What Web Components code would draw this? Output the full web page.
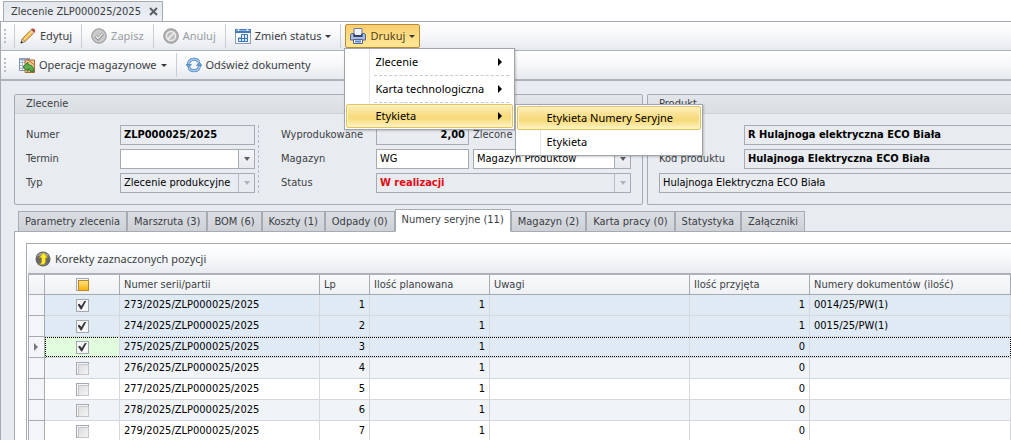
<!DOCTYPE html>
<html lang="pl">
<head>
<meta charset="UTF-8">
<meta name="viewport" content="width=device-width, initial-scale=1">
<title>Zlecenie ZLP000025/2025</title>
<style>
    :root {
        --ui-font: "DejaVu Sans Condensed", "DejaVu Sans", sans-serif;
        --bar-font: "Noto Sans", "Open Sans", sans-serif;
        --line: #a5aab3;
        --text: #3b3e44;
        --surface: #e8ebf0;
    }
    html {
        overflow: hidden;
    }
    body {
        margin: 0;
        background: #fff;
        color: var(--text);
        font: 11px/14px var(--ui-font);
    }
</style>
</head>
<body>
<order-window>
    <doc-tab slot="tabs">Zlecenie ZLP000025/2025</doc-tab>

    <tool-bar slot="bars" label="Zlecenie">
        <tool-separator></tool-separator>
        <tool-button icon="pencil">Edytuj</tool-button>
        <tool-separator></tool-separator>
        <tool-button icon="check" disabled>Zapisz</tool-button>
        <tool-separator></tool-separator>
        <tool-button icon="cancel" disabled>Anuluj</tool-button>
        <tool-separator></tool-separator>
        <tool-button icon="calendar" caret>Zmień status</tool-button>
        <tool-separator></tool-separator>
        <tool-button icon="printer" caret open>Drukuj
            <popup-menu slot="menu">
                <menu-entry arrow>Zlecenie</menu-entry>
                <menu-divider></menu-divider>
                <menu-entry arrow>Karta technologiczna</menu-entry>
                <menu-divider></menu-divider>
                <menu-entry arrow active>Etykieta
                    <popup-menu slot="submenu" wide>
                        <menu-entry active>Etykieta Numery Seryjne</menu-entry>
                        <menu-entry>Etykieta</menu-entry>
                    </popup-menu>
                </menu-entry>
            </popup-menu>
        </tool-button>
    </tool-bar>

    <tool-bar slot="bars" label="Magazyn" last>
        <tool-button icon="stock" caret>Operacje magazynowe</tool-button>
        <tool-separator></tool-separator>
        <tool-button icon="refresh">Odśwież dokumenty</tool-button>
    </tool-bar>

    <group-box slot="groups" heading="Zlecenie" class="order">
        <order-form></order-form>
    </group-box>
    <group-box slot="groups" heading="Produkt" class="product">
        <product-form></product-form>
    </group-box>

    <tab-strip active="5"
        items="Parametry zlecenia|Marszruta (3)|BOM (6)|Koszty (1)|Odpady (0)|Numery seryjne (11)|Magazyn (2)|Karta pracy (0)|Statystyka|Załączniki">
        <serial-panel>
            <tool-button slot="bar" icon="corrections">Korekty zaznaczonych pozycji</tool-button>
            <serial-grid></serial-grid>
        </serial-panel>
    </tab-strip>
</order-window>

<script>
const ICONS = {
    pencil: `
        <path d="M1 15l1.300-4.300L11.500 1.200l3.200 2.900L5.300 13.300z" fill="#f0b040" stroke="#94703c" stroke-width=".8"/>
        <path d="M4 11.700L12.700 2.800" stroke="#ffe08a" stroke-width="1.300"/>
        <path d="M1 15l1.200-4 2.900 2.500z" fill="#ecd9b5" stroke="#8a7350" stroke-width=".6"/>
        <path d="M.600 15.400l.7-2.400 1.700 1.500z" fill="#222"/>
        <path d="M11 1.800l1.300-1.400q2.800-.2 3 2.900l-1.200 1.300z" fill="#b5483a"/>
        <path d="M10.300 2.400l3.100 2.900" stroke="#ddd8d0" stroke-width="1.100"/>`,
    check: `
        <circle cx="8" cy="8" r="7.300" fill="#b7b7b7" stroke="#a2a2a2"/>
        <circle cx="8" cy="8" r="5.500" fill="#c9c9c9" stroke="#dedede" stroke-width=".6"/>
        <path d="M4.500 8.200l2.600 2.600 4.700-5.200" fill="none" stroke="#8b8b8b" stroke-width="3"/>
        <path d="M4.800 8.200l2.300 2.200 4.400-4.800" fill="none" stroke="#efefef" stroke-width="1.500"/>`,
    cancel: `
        <circle cx="8" cy="8" r="7.300" fill="#b1b1b1" stroke="#9c9c9c"/>
        <circle cx="8" cy="8" r="4.600" fill="#bcbcbc" stroke="#ededed" stroke-width="1.500"/>
        <path d="M4.900 11.100l6.200-6.200" stroke="#ededed" stroke-width="1.600"/>`,
    calendar: `
        <rect x=".5" y="1.500" width="15" height="14" fill="#f7f9fc" stroke="#8d9bb0"/>
        <rect x="0" y="1" width="16" height="4" fill="#4478b8"/>
        <path d="M1 2.500h14" stroke="#8fb5e2"/>
        <path d="M3.500 0v3M12.500 0v3" stroke="#dfe8f4" stroke-width="1.500"/>
        <path d="M6.500 6.500h6v7h-9v-3.500h3z" fill="#dce9f8" stroke="#3f74b9"/>
        <path d="M4 10.500h8.500M6.500 10v3.500M9.500 7v6.500" stroke="#3f74b9"/>`,
    printer: `
        <path d="M4 .5h8v6H4z" fill="#f4f7fd" stroke="#6c7da4"/>
        <path d="M1.500 5.500h2.500v3h8v-3h2.500l1 1.500v5h-15V7z" fill="#a9bbdf" stroke="#53658f"/>
        <path d="M3.500 6h9v3h-9z" fill="#344468"/>
        <path d="M5 1h6v6H5z" fill="#eef3fc"/>
        <path d="M3.500 11.500h9v4h-9z" fill="#fff" stroke="#53658f"/>
        <path d="M5 13.500h6" stroke="#4d86d8" stroke-width="2"/>`,
    stock: `
        <path d="M.500 1.500h10v12H.500z" fill="#fff" stroke="#7e8fb2"/>
        <path d="M1 2.500h9" stroke="#8ea6d4" stroke-width="2"/>
        <path d="M1 5.500h9M1 8.500h9M1 11.500h9M3.500 3v10M6.500 3v10" stroke="#a8b5d0"/>
        <path d="M6 3h9.500v12.500H6z" fill="#f3c98d" stroke="#a86a35"/>
        <path d="M9 3l6.500 5M6 12l9.500 3" stroke="#c8733f"/>
        <path d="M4 10l5-5v2.700q6 0 5.500 6.800h-3q.2-2.800-2.500-2.600v2.600z" fill="#5cae48" stroke="#236b24" stroke-width=".8"/>`,
    refresh: `
        <path d="M2.500 8.800Q2 2.500 8 2.300q3.500 0 5 2.700" fill="none" stroke="#4f82bf" stroke-width="3"/>
        <path d="M2.500 8.800Q2 2.500 8 2.300q3.500 0 5 2.700" fill="none" stroke="#a9cdf0" stroke-width="1.500"/>
        <path d="M13.500 7.200Q14 13.500 8 13.700q-3.500 0-5-2.700" fill="none" stroke="#4f82bf" stroke-width="3"/>
        <path d="M13.500 7.200Q14 13.500 8 13.700q-3.500 0-5-2.700" fill="none" stroke="#a9cdf0" stroke-width="1.500"/>
        <path d="M0 7.500h5.500L2.700 11zM10.500 8.500H16L13.300 5z" fill="#6ea2d8" stroke="#4f82bf" stroke-width=".7"/>`,
    corrections: `
        <circle cx="8" cy="8" r="7.500" fill="#66686b"/>
        <path d="M2 5.500a6.700 6.700 0 0 1 12 0Q8 3 2 5.500z" fill="#a5a7a9"/>
        <path d="M3 12a6.500 6.500 0 0 0 10 0Q8 14 3 12z" fill="#85878a"/>
        <path d="M8.500 1.500L13 6.800h-2.300v3.400q0 3.300-4.200 3.500l-2-.2q2-1.300 2-3V6.800H4z" fill="#ffe92e" stroke="#ab8d13" stroke-width=".7"/>`
};

// Wspólna baza: każdy element dostaje własny shadow root
class BaseElement extends HTMLElement {
    constructor() {
        super();
        this.attachShadow({ mode: 'open' });
    }
    draw(css, html) {
        this.shadowRoot.innerHTML = `<style>:host, * { box-sizing: border-box; } ${css}</style>${html}`;
    }
}

class AppIcon extends BaseElement {
    connectedCallback() {
        this.draw(`
            :host { display: block; flex: none; width: 16px; height: 16px; }
            svg { display: block; }
        `, `<svg width="16" height="16" viewBox="0 0 16 16" aria-hidden="true">${ICONS[this.getAttribute('name')]}</svg>`);
    }
}

class OrderWindow extends BaseElement {
    connectedCallback() {
        this.draw(`
            :host { display: flex; flex-direction: column; min-height: 100vh; }
            .tabs { display: flex; padding: 1px 3px 0; height: 21px; }
            .body { flex: 1; border-left: 1px solid var(--line); background: var(--surface); padding: 13px 0 0 13px; }
            .groups { display: flex; gap: 4px; margin-bottom: 4px; }
            ::slotted(.order) { flex: 0 0 629px; }
            ::slotted(.product) { flex: 1; }
        `, `
            <nav class="tabs"><slot name="tabs"></slot></nav>
            <slot name="bars"></slot>
            <main class="body">
                <div class="groups"><slot name="groups"></slot></div>
                <slot></slot>
            </main>
        `);
    }
}

class DocTab extends BaseElement {
    connectedCallback() {
        this.draw(`
            :host {
                display: flex; align-items: center; gap: 8px; padding: 0 4px 0 7px; height: 20px;
                background: linear-gradient(#e4e7eb, #eceff3);
                border: 1px solid var(--line); border-bottom: 0;
            }
            button { display: block; padding: 0; border: 0; background: none; width: 9px; height: 9px; }
            svg { display: block; }
        `, `
            <span><slot></slot></span>
            <button type="button" aria-label="Zamknij"><svg width="9" height="9" viewBox="0 0 9 9"><path d="M1 1l7 7M8 1L1 8" stroke="#5b5e65" stroke-width="2"/></svg></button>
        `);
    }
}

class ToolBar extends BaseElement {
    connectedCallback() {
        this.setAttribute('role', 'toolbar');
        this.setAttribute('aria-label', this.getAttribute('label'));
        this.draw(`
            :host {
                display: flex; align-items: center; height: 30px; padding-left: 3px;
                background: linear-gradient(#fff, #f7f8fa 45%, #e6eaee);
                border-left: 1px solid var(--line); border-bottom: 1px solid #adb1b9;
            }
            :host(:not([last])) { border-top: 1px solid var(--line); }
            :host([last]) { border-bottom-width: 2px; }
            .grip { width: 2px; height: 14px; margin-right: 8px; background: repeating-linear-gradient(#b9bdc4 0 2px, transparent 2px 4px); }
        `, `<span class="grip"></span><slot></slot>`);
    }
}

class ToolSeparator extends BaseElement {
    connectedCallback() {
        this.draw(`
            :host { display: block; width: 1px; height: 24px; margin: 0 4px; background: #c9cdd4; }
            :host(:first-child) { margin: 0; }
        `, '');
    }
}

class ToolButton extends BaseElement {
    connectedCallback() {
        const caret = this.hasAttribute('caret')
            ? '<svg class="caret" width="6" height="3" viewBox="0 0 6 3"><path d="M0 0h6L3 3z" fill="#33363b"/></svg>' : '';
        this.draw(`
            :host { display: block; position: relative; font: 11px/16px var(--bar-font); }
            button {
                display: flex; align-items: center; gap: 4px; height: 24px; padding: 0 4px;
                border: 1px solid transparent; border-radius: 2px; background: none;
                font: inherit; color: var(--text); white-space: nowrap;
            }
            button:disabled { color: #9b9ea3; }
            :host([open]) button {
                border-color: #b98b35; color: #4e3f1c;
                background: linear-gradient(#f8cd6e, #ffdf88 60%, #ffe797);
            }
        `, `
            <button type="button" ${this.hasAttribute('disabled') ? 'disabled' : ''}>
                <app-icon name="${this.getAttribute('icon')}"></app-icon>
                <span><slot></slot></span>${caret}
            </button>
            <slot name="menu"></slot>
        `);
    }
}

class PopupMenu extends BaseElement {
    connectedCallback() {
        this.setAttribute('role', 'menu');
        this.draw(`
            :host {
                position: absolute; z-index: 10; left: -1px; top: 24px; width: 171px; padding: 1px;
                border: 1px solid #9fa4ad; color: #000; font: 11px/16px var(--bar-font);
                background: linear-gradient(90deg, transparent 23px, #e2e4e7 23px 24px, transparent 24px) 1px 0 no-repeat, #fff;
                box-shadow: 1px 1px 2px rgba(0, 0, 0, .2);
            }
            :host([wide]) { left: calc(100% + 2px); top: 0; width: 188px; z-index: 11; }
        `, `<slot></slot>`);
    }
}

class MenuEntry extends BaseElement {
    connectedCallback() {
        const arrow = this.hasAttribute('arrow')
            ? '<svg width="4" height="8" viewBox="0 0 4 8"><path d="M0 0l4 4-4 4z" fill="#000"/></svg>' : '';
        this.draw(`
            :host { display: block; position: relative; }
            button {
                display: flex; align-items: center; justify-content: space-between; width: 100%; height: 24px;
                padding: 0 10px 0 28px; border: 1px solid transparent; border-radius: 2px;
                background: none; font: inherit; color: inherit; white-space: nowrap;
            }
            :host([active]) > button {
                border-color: #e3c35f; box-shadow: inset 0 0 0 1px #fff3c4;
                background: linear-gradient(#fcefbb, #f9dd85 45%, #f6d977 60%, #fff4c5);
            }
        `, `
            <button type="button" role="menuitem"><span><slot></slot></span>${arrow}</button>
            <slot name="submenu"></slot>
        `);
    }
}

class MenuDivider extends BaseElement {
    connectedCallback() {
        this.draw(`
            :host { display: block; height: 3px; padding: 1px 4px 0 28px; }
            div { border-top: 1px dashed #c6c9ce; }
        `, '<div></div>');
    }
}

class GroupBox extends BaseElement {
    connectedCallback() {
        this.draw(`
            :host { display: block; border: 1px solid var(--line); border-radius: 2px; min-width: 0; }
            :host(.product) { border-right: 0; border-radius: 2px 0 0 2px; }
            h2 {
                margin: 0; padding: 2px 11px; font: inherit; border-bottom: 1px solid #cdd1d6;
                background: linear-gradient(#e2e6ea, #d9dee3);
            }
            .content { padding: 11px; }
            :host(.product) .content { padding-right: 0; }
        `, `<h2>${this.getAttribute('heading')}</h2><div class="content"><slot></slot></div>`);
    }
}

const FIELD_CSS = `
    :host { display: flex; }
    .rows { display: grid; gap: 4px; align-content: start; }
    .row { display: flex; align-items: center; height: 20px; }
    .row > label { flex: none; white-space: nowrap; }
    .box { display: flex; flex: 1; min-width: 0; height: 20px; border: 1px solid var(--line); background: #fff; }
    .box.locked { background: var(--surface); }
    input, select {
        flex: 1; min-width: 0; width: 100%; margin: 0; padding: 0 3px; border: 0; border-radius: 0; outline: 0;
        background: none; appearance: none; font: inherit; color: #000; opacity: 1;
    }
    .bold { font-weight: bold; }
    .drop { display: flex; align-items: center; justify-content: center; width: 16px; border-left: 1px solid var(--line); background: linear-gradient(#f6f7f9, #e6e9ee); pointer-events: none; }
    .locked .drop { background: none; border-color: #b9bdc5; }
`;

function textField(id, value, cls = '', locked = false) {
    return `<div class="box ${locked ? 'locked' : ''}"><input id="${id}" type="text" class="${cls}" value="${value}" ${locked ? 'readonly' : ''}></div>`;
}

function dropField(id, value, cls = '', locked = false) {
    const tint = locked ? '#aeb2b9' : '#5a5e66';
    return `<div class="box ${locked ? 'locked' : ''}">
        <select id="${id}" class="${cls}" ${locked ? 'disabled' : ''}><option>${value}</option></select>
        <span class="drop"><svg width="6" height="4" viewBox="0 0 6 4"><path d="M0 0h6L3 4z" fill="${tint}"/></svg></span>
    </div>`;
}

class OrderForm extends BaseElement {
    connectedCallback() {
        this.draw(`
            ${FIELD_CSS}
            .left { flex: 0 0 233px; padding-right: 3px; border-right: 1px dashed #b5b9c1; }
            .left label { width: 94px; }
            .right { flex: 1; padding-left: 22px; }
            .right label { width: 95px; }
            .right label.next { width: auto; }
            .right .short { display: flex; flex: 0 0 93px; margin-right: 4px; }
            .next { margin-right: 8px; }
            .amount { text-align: right; }
            .red { color: #e00b14; }
        `, `
            <div class="rows left">
                <div class="row"><label for="number">Numer</label>${textField('number', 'ZLP000025/2025', 'bold', true)}</div>
                <div class="row"><label for="term">Termin</label>${dropField('term', '')}</div>
                <div class="row"><label for="type">Typ</label>${dropField('type', 'Zlecenie produkcyjne', '', true)}</div>
            </div>
            <div class="rows right">
                <div class="row">
                    <label for="made">Wyprodukowane</label><span class="short">${textField('made', '2,00', 'bold amount', true)}</span>
                    <label class="next" for="ordered">Zlecone</label>${textField('ordered', '', '', true)}
                </div>
                <div class="row">
                    <label for="store">Magazyn</label><span class="short">${textField('store', 'WG')}</span>
                    ${dropField('storeName', 'Magazyn Produktów')}
                </div>
                <div class="row"><label for="status">Status</label>${dropField('status', 'W realizacji', 'bold red', true)}</div>
            </div>
        `);
        this.shadowRoot.querySelector('#storeName').setAttribute('aria-label', 'Nazwa magazynu');
    }
}

class ProductForm extends BaseElement {
    connectedCallback() {
        this.draw(`
            ${FIELD_CSS}
            .rows { flex: 1; }
            label { width: 85px; }
            .box { border-right: 0; }
        `, `
            <div class="rows">
                <div class="row"><label for="item">Numer</label>${textField('item', 'R Hulajnoga elektryczna ECO Biała', 'bold', true)}</div>
                <div class="row"><label for="code">Kod produktu</label>${textField('code', 'Hulajnoga Elektryczna ECO Biała', 'bold', true)}</div>
                <div class="row">${textField('name', 'Hulajnoga Elektryczna ECO Biała', '', true)}</div>
            </div>
        `);
        this.shadowRoot.querySelector('#name').setAttribute('aria-label', 'Nazwa produktu');
    }
}

class TabStrip extends BaseElement {
    connectedCallback() {
        const active = Number(this.getAttribute('active'));
        const tabs = this.getAttribute('items').split('|').map((name, i) =>
            `<button type="button" role="tab" aria-selected="${i === active}">${name}</button>`).join('');
        this.draw(`
            :host { display: block; }
            .strip { position: relative; z-index: 1; display: flex; align-items: flex-end; height: 23px; padding-left: 4px; }
            button {
                height: 21px; padding: 0 6px; border: 1px solid var(--line);
                background: linear-gradient(#dbdee3, #cdd1d6);
                font: inherit; color: var(--text); white-space: nowrap;
            }
            button[aria-selected="true"] { height: 23px; padding: 0 6px 2px; background: #fff; border-bottom-color: #fff; }
            .page { margin-top: -1px; border: 1px solid var(--line); border-width: 1px 0 0 1px; background: #fff; padding: 11px 0 0 11px; }
        `, `<div class="strip" role="tablist">${tabs}</div><div class="page" role="tabpanel"><slot></slot></div>`);
    }
}

class SerialPanel extends BaseElement {
    connectedCallback() {
        this.draw(`
            :host { display: block; border: 1px solid var(--line); border-width: 1px 0 0 1px; padding-left: 1px; }
            .bar {
                display: flex; align-items: center; height: 31px; padding-left: 2px; border-bottom: 2px solid #adb1b9;
                background: linear-gradient(#fff, #f8f9fb 45%, #e8ebef);
            }
        `, `<div class="bar"><slot name="bar"></slot></div><slot></slot>`);
    }
}

const ROWS = [
    { no: 273, taken: 1, docs: '0014/25/PW(1)', checked: true },
    { no: 274, taken: 1, docs: '0015/25/PW(1)', checked: true },
    { no: 275, taken: 0, docs: '', checked: true, current: true },
    { no: 276, taken: 0, docs: '' },
    { no: 277, taken: 0, docs: '' },
    { no: 278, taken: 0, docs: '' },
    { no: 279, taken: 0, docs: '' }
];

class SerialGrid extends BaseElement {
    connectedCallback() {
        const rows = ROWS.map((row, i) => {
            const serial = `${row.no}/2025/ZLP000025/2025`;
            const cls = `${row.checked ? 'selected' : ''} ${row.current ? 'current' : ''}`;
            return `<tr class="${cls}">
                <td class="mark">${row.current ? '<svg width="4" height="8" viewBox="0 0 4 8"><path d="M0 0l4 4-4 4z" fill="#73777e"/></svg>' : ''}</td>
                <td class="tick"><input type="checkbox" aria-label="${serial}" ${row.checked ? 'checked' : ''}></td>
                <td>${serial}</td>
                <td class="num">${i + 1}</td>
                <td class="num">1</td>
                <td></td>
                <td class="num">${row.taken}</td>
                <td>${row.docs}</td>
            </tr>`;
        }).join('');
        this.draw(`
            :host { display: block; color: #000; }
            table { width: 100%; table-layout: fixed; border-collapse: separate; border-spacing: 0; background: #fff; }
            col.mark { width: 17px; }
            col.tick { width: 75px; }
            col.wide { width: 200px; }
            col.mid { width: 120px; }
            col.small { width: 50px; }
            th, td { padding: 0 4px; text-align: left; font-weight: normal; border: 0 solid #d5d9de; border-width: 0 1px 1px 0; white-space: nowrap; overflow: hidden; }
            th { height: 20px; color: var(--text); border-color: var(--line); background: linear-gradient(#f9fafb, #eef0f4); }
            td { height: 21px; }
            tr:nth-child(even) td { background-color: #f0f4f9; }
            tr.selected td { background-color: #e0eaf5; }
            tr td.mark, tr th.mark { border-color: var(--line); border-left-width: 1px; padding: 0 0 0 5px; }
            tbody tr td.mark { background: #f3f5f8; }
            .num { text-align: right; }
            .tick { text-align: center; }
            tr.current td:not(.mark) {
                background-image:
                    repeating-linear-gradient(90deg, #000 0 1px, transparent 1px 2px),
                    repeating-linear-gradient(90deg, #000 0 1px, transparent 1px 2px);
                background-position: top, bottom;
                background-size: 100% 1px;
                background-repeat: no-repeat;
                background-origin: border-box, padding-box;
            }
            tr.current td.tick { background-color: #e0fcdc; border-left: 1px dotted #000; }
            tr.current td:last-child { border-right: 1px dotted #000; }
            svg { display: block; }
            input {
                display: block; appearance: none; width: 13px; height: 13px; margin: 0 auto; padding: 1px;
                border: 1px solid #a3a8b0; background: #f6f6f7;
            }
            input::before {
                content: ""; display: block; width: 9px; height: 9px; border: 1px solid #c4c6c9;
                background: linear-gradient(135deg, #dcdddf, #f4f4f4);
            }
            input:checked::before {
                border: 0; background: #34373d;
                clip-path: polygon(0 45%, 22% 35%, 42% 62%, 80% 0, 100% 0, 46% 100%, 36% 100%);
            }
            input:indeterminate::before { border-color: #b98a22; background: linear-gradient(#ffe07e, #f7b60e); }
        `, `
            <table>
                <colgroup><col class="mark"><col class="tick"><col class="wide"><col class="small"><col class="mid"><col class="wide"><col class="mid"><col></colgroup>
                <thead><tr>
                    <th class="mark"></th>
                    <th class="tick"><input type="checkbox" id="all" aria-label="Zaznacz wszystkie"></th>
                    <th>Numer serii/partii</th>
                    <th>Lp</th>
                    <th>Ilość planowana</th>
                    <th>Uwagi</th>
                    <th>Ilość przyjęta</th>
                    <th>Numery dokumentów (ilość)</th>
                </tr></thead>
                <tbody>${rows}</tbody>
            </table>
        `);
        this.shadowRoot.querySelector('#all').indeterminate = true;
    }
}

customElements.define('app-icon', AppIcon);
customElements.define('order-window', OrderWindow);
customElements.define('doc-tab', DocTab);
customElements.define('tool-bar', ToolBar);
customElements.define('tool-separator', ToolSeparator);
customElements.define('tool-button', ToolButton);
customElements.define('popup-menu', PopupMenu);
customElements.define('menu-entry', MenuEntry);
customElements.define('menu-divider', MenuDivider);
customElements.define('group-box', GroupBox);
customElements.define('order-form', OrderForm);
customElements.define('product-form', ProductForm);
customElements.define('tab-strip', TabStrip);
customElements.define('serial-panel', SerialPanel);
customElements.define('serial-grid', SerialGrid);
</script>
</body>
</html>
